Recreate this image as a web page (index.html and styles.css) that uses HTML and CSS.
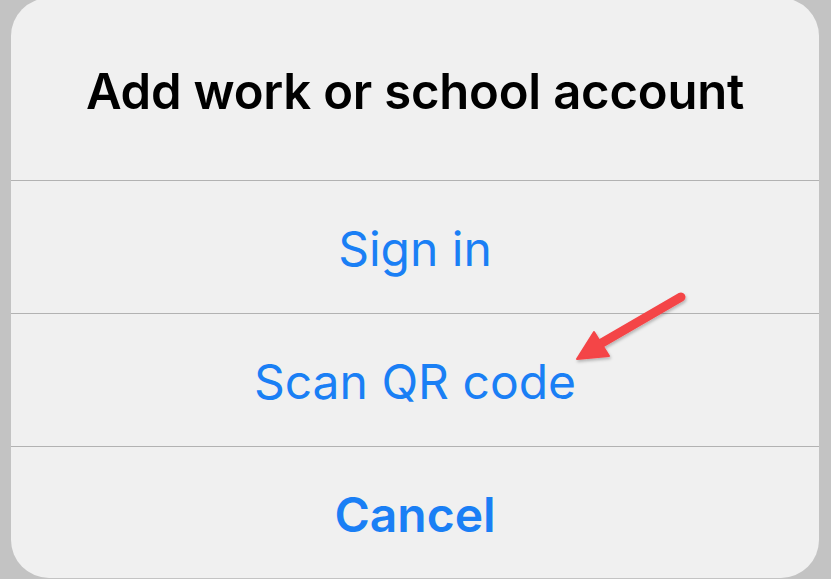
FILE: index.html
```html
<!DOCTYPE html>
<html>
<head>
<meta charset="utf-8">
<link rel="stylesheet" href="styles.css">
</head>
<body>
<div class="sheet">
  <div class="title">Add work or school account</div>
  <div class="row action">Sign in</div>
  <div class="row action">Scan QR code</div>
  <div class="row action cancel">Cancel</div>
</div>
<svg class="arrow" width="831" height="579" viewBox="0 0 831 579">
  <defs>
    <filter id="sh" x="-20%" y="-20%" width="140%" height="140%">
      <feDropShadow dx="1" dy="2" stdDeviation="1.5" flood-color="#000" flood-opacity="0.25"/>
    </filter>
  </defs>
  <g filter="url(#sh)" fill="#f44447" stroke="#f44447">
    <line x1="681" y1="297" x2="600" y2="344" stroke-width="9" stroke-linecap="round"/>
    <polygon points="577,359 594,332 609,356" stroke-width="2" stroke-linejoin="round"/>
  </g>
</svg>
</body>
</html>
```
FILE: styles.css
```css
html, body {
  margin: 0;
  padding: 0;
}
body {
  width: 831px;
  height: 579px;
  background: #c3c3c3;
  overflow: hidden;
  position: relative;
  font-family: Inter, "Open Sans", "Liberation Sans", sans-serif;
}
.sheet {
  margin: -2px 0 0 11px;
  width: 808px;
  height: 580px;
  background: #f0f0f0;
  border-radius: 38px;
  display: flex;
  flex-direction: column;
  overflow: hidden;
}
.title {
  height: 183px;
  flex: none;
  display: flex;
  align-items: center;
  justify-content: center;
  font-size: 49px;
  font-weight: 600;
  color: #000;
  padding-top: 5px;
  box-sizing: border-box;
  border-bottom: 1px solid #b2b2b2;
  letter-spacing: -0.2px;
}
.row {
  height: 133px;
  flex: none;
  display: flex;
  align-items: center;
  justify-content: center;
  box-sizing: border-box;
  border-bottom: 1px solid #b2b2b2;
  font-size: 48px;
  color: #1a7ff5;
  padding-top: 2px;
}
.row.cancel {
  border-bottom: none;
  font-weight: 600;
}
.arrow {
  position: absolute;
  left: 0;
  top: 0;
}
```
